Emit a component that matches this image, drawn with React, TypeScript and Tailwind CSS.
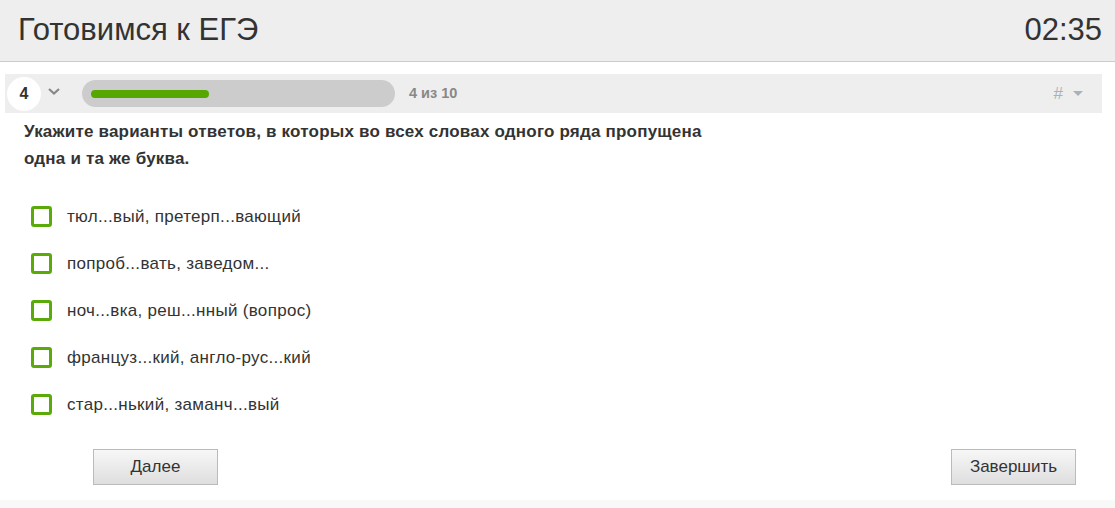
import { useState } from "react";

const VARIANTY = [
  "тюл...вый, претерп...вающий",
  "попроб...вать, заведом...",
  "ноч...вка, реш...нный (вопрос)",
  "француз...кий, англо-рус...кий",
  "стар...нький, заманч...вый",
];

export default function App() {
  const [otmecheno, setOtmecheno] = useState<number[]>([]);

  const pereklyuchit = (i: number) =>
    setOtmecheno((p) => (p.includes(i) ? p.filter((x) => x !== i) : [...p, i]));

  return (
    <div className="w-[1115px] h-[508px] bg-white overflow-hidden font-['Liberation_Sans',Arial,sans-serif] text-[#333]">
      <header className="h-[62px] bg-[#eeeeee] border-b border-[#cccccc] flex items-center justify-between pl-[18px] pr-[13px]">
        <h1 className="text-[31px] leading-none text-[#333] pb-[2px]">Готовимся к ЕГЭ</h1>
        <span className="text-[31px] leading-none text-[#333] pb-[2px]">02:35</span>
      </header>

      <div className="mt-[12px] ml-[5px] w-[1097px] h-[39px] bg-[#eeeeee] flex items-center">
        <div className="ml-[2px] w-[34px] h-[34px] rounded-full bg-white flex items-center justify-center text-[16px] font-bold text-[#333]">
          4
        </div>
        <svg width="14" height="10" viewBox="0 0 14 10" className="ml-[6px] mb-[6px]">
          <path d="M2 3 L7 7.5 L12 3" fill="none" stroke="#888" strokeWidth="2.2" />
        </svg>
        <div className="ml-[21px] w-[313px] h-[27px] rounded-full bg-[#cccccc] flex items-center px-[9px]">
          <div className="w-[118px] h-[8px] rounded-full bg-[#56a800]" />
        </div>
        <span className="ml-[14px] text-[14.5px] font-bold text-[#888888]">4 из 10</span>
        <div className="ml-auto mr-[19px] flex items-center gap-[10px] text-[#a9b1b9]">
          <span className="text-[17px]">#</span>
          <svg width="10" height="6" viewBox="0 0 10 6">
            <path d="M0 0 L10 0 L5 5 Z" fill="#a9b1b9" />
          </svg>
        </div>
      </div>

      <p className="ml-[24px] mt-[5px] w-[700px] text-[17px] tracking-[0.2px] leading-[27px] font-bold text-[#333]">
        Укажите варианты ответов, в которых во всех словах одного ряда пропущена одна и та же буква.
      </p>

      <ul className="mt-[21px] ml-[31px]">
        {VARIANTY.map((v, i) => (
          <li key={v} className="h-[47px] flex items-center">
            <button
              type="button"
              onClick={() => pereklyuchit(i)}
              className="flex items-center gap-[15px] text-left"
            >
              <span
                className={`w-[21px] h-[21px] rounded-[3px] border-[3px] border-[#5aab0a] ${otmecheno.includes(i) ? "bg-[#5aab0a]" : "bg-white"}`}
              />
              <span className="text-[17px] tracking-[0.3px] text-[#333]">{v}</span>
            </button>
          </li>
        ))}
      </ul>

      <div className="mt-[21px] flex justify-between pl-[93px] pr-[39px]">
        <button
          type="button"
          className="w-[125px] h-[36px] border border-[#bbbbbb] bg-gradient-to-b from-[#f7f7f7] to-[#dedede] text-[17px] text-[#333]"
        >
          Далее
        </button>
        <button
          type="button"
          className="w-[125px] h-[36px] border border-[#bbbbbb] bg-gradient-to-b from-[#f7f7f7] to-[#dedede] text-[17px] text-[#333]"
        >
          Завершить
        </button>
      </div>

      <div className="mt-[15px] h-[10px] bg-[#f8f8f8]" />
    </div>
  );
}
